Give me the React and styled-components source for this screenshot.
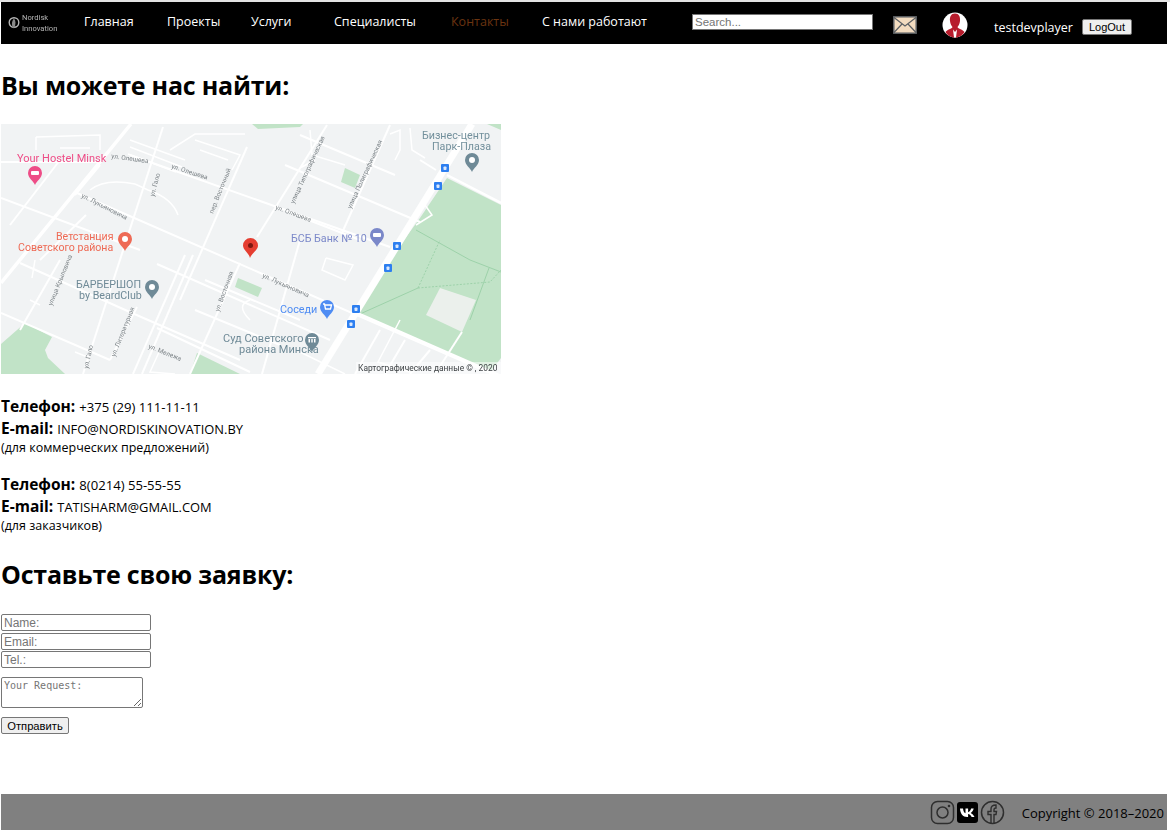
import React from 'react'
import styled, { createGlobalStyle } from 'styled-components'

const GlobalStyle = createGlobalStyle`
  html, body { margin: 0; padding: 0; background: #fff; }
  body { font-family: "Open Sans", "Noto Sans", sans-serif; color: #000; }
  * { box-sizing: border-box; }
`

const TopStrip = styled.div`
  height: 2px;
  background: #e3e3e3;
`

const Page = styled.div`
  width: 1170px;
  padding: 0 3px 0 1px;
`

const Nav = styled.nav`
  height: 42px;
  background: #000;
  display: flex;
  align-items: center;
  color: #fff;
  font-size: 12.5px;
`

const Logo = styled.div`
  width: 83px;
  padding-left: 7px;
  display: flex;
  align-items: center;
  gap: 2px;
  color: #b5b5b5;
  filter: blur(0.4px);
`

const LogoText = styled.span`
  font-family: "Roboto", sans-serif;
  font-size: 7.6px;
  line-height: 11px;
`

const NavLink = styled.a`
  width: ${props => props.$width}px;
  flex: none;
  color: ${props => (props.$active ? '#6b3410' : '#fff')};
  position: relative;
  top: -2px;
`

const Search = styled.input`
  width: 181px;
  height: 16px;
  margin-right: 20px;
  position: relative;
  top: -1px;
  padding: 1px 2px;
  font-family: "Liberation Sans", Arial, sans-serif;
  font-size: 11.5px;
  background: #fff;
  border: 1px solid #767676;
  border-radius: 0;
  &::placeholder { color: #757575; }
`

const Mail = styled.svg`
  width: 24px;
  height: 18px;
  margin-top: 3px;
  margin-right: 25px;
  flex: none;
`

const Avatar = styled.svg`
  width: 26px;
  height: 26px;
  margin-top: 4px;
  margin-right: 26px;
  flex: none;
`

const UserName = styled.span`
  width: 88px;
  flex: none;
  font-size: 12.5px;
  margin-top: 8px;
`

const LogOut = styled.button`
  width: 50px;
  height: 16px;
  margin-top: 8px;
  padding: 0;
  font-family: "Liberation Sans", Arial, sans-serif;
  font-size: 11px;
  line-height: 13px;
  color: #000;
  background: #efefef;
  border: 1px solid #767676;
  border-radius: 2px;
`

const Main = styled.main`
  height: 750px;
`

const Heading = styled.h1`
  margin: 0;
  font-size: 25px;
  line-height: 36px;
  letter-spacing: -0.22px;
  font-weight: 700;
`

const MapHeading = styled(Heading)`
  padding-top: 23px;
  margin-bottom: 21px;
`

const FormHeading = styled(Heading)`
  padding-top: 4px;
  margin-bottom: 22px;
`

const MapPicture = styled.svg`
  display: block;
  width: 500px;
  height: 250px;
  filter: blur(0.35px);
`

const Contacts = styled.div`
  margin-top: 22px;
  margin-bottom: 18px;
  & + & { margin-top: 0; }
`

const Line = styled.div`
  line-height: 21px;
  height: 22px;
  white-space: nowrap;
`

const Label = styled.b`
  font-size: 15.5px;
  font-weight: 700;
`

const Value = styled.span`
  font-size: ${props => props.$size}px;
`

const Note = styled.div`
  font-size: 12.5px;
  line-height: 18px;
  height: 17px;
  margin-top: -1px;
`

const Form = styled.form`
  display: flex;
  flex-direction: column;
  align-items: flex-start;
`

const Field = styled.input`
  width: 150px;
  height: 17px;
  margin-bottom: ${props => props.$gap}px;
  padding: 1px 2px;
  font-family: "Liberation Sans", Arial, sans-serif;
  font-size: 12px;
  background: #fff;
  border: 1px solid #767676;
  border-radius: 2px;
  &::placeholder { color: #757575; }
`

const Request = styled.textarea`
  width: 142px;
  height: 31px;
  margin-top: 7px;
  padding: 2px;
  font-family: "DejaVu Sans Mono", monospace;
  font-size: 10px;
  line-height: 12px;
  border: 1px solid #767676;
  border-radius: 2px;
  &::placeholder { color: #757575; }
`

const Submit = styled.button`
  width: 68px;
  height: 17px;
  margin-top: 9px;
  padding: 0;
  font-family: "Liberation Sans", Arial, sans-serif;
  font-size: 11.2px;
  color: #000;
  background: #efefef;
  border: 1px solid #767676;
  border-radius: 2px;
`

const Footer = styled.footer`
  height: 36px;
  background: #808080;
  display: flex;
  align-items: center;
  justify-content: flex-end;
  padding-right: 3px;
`

const Social = styled.svg`
  width: 25px;
  height: 25px;
  flex: none;
`

const Copyright = styled.span`
  margin-left: 17px;
  font-size: 13px;
  position: relative;
  top: 1px;
`

const WHITE_ROADS = [
  // wide avenues
  [7, 472, 124, 318, 374],
  [3.5, 131, 124, 1, 283],
  // streets running south east
  [2, 130, 155, 390, 247],
  [2, 1, 162, 100, 162],
  [2, 1, 198, 140, 250],
  [2, 77, 193, 501, 378],
  [2, 20, 263, 132, 313],
  [2, 132, 313, 240, 360],
  [2, 1, 313, 110, 360],
  [2, 157, 264, 330, 340],
  [2, 157, 328, 250, 372],
  [2, 285, 165, 420, 222],
  [2, 300, 135, 395, 175],
  [2, 288, 212, 360, 240],
  [2.5, 447, 175, 501, 203],
  [2, 420, 160, 436, 170],
  [2, 205, 280, 300, 320],
  [2, 195, 310, 280, 345],
  // streets running north north east
  [2, 163, 127, 83, 374],
  [2, 247, 147, 180, 300],
  [2, 240, 263, 190, 374],
  [2, 327, 125, 257, 237],
  [2, 390, 125, 342, 233],
  [2, 300, 240, 262, 374],
  [2, 137, 307, 110, 360],
  [2, 185, 255, 133, 374],
  [2, 193, 255, 142, 374],
  [2, 86, 215, 40, 260],
  [2, 60, 160, 10, 225],
  [2, 100, 165, 75, 195],
  [2, 60, 260, 20, 330],
  [2, 380, 330, 355, 374],
  [2, 405, 340, 385, 374],
  [2, 430, 350, 410, 374],
  [2, 462, 332, 435, 374],
]

// small yards and driveways between the streets
const YARDS = [
  'M130 140 L185 160 M130 147 L182 167 M128 154 L176 172 M170 150 L195 134 L245 134',
  'M36 137 L36 150 M36 137 L100 135 L100 150 M60 148 L90 148',
  'M195 140 L240 155 L232 170 M200 150 L228 160',
  'M90 190 Q105 178 135 184 M135 184 L148 190 Q172 198 178 215',
  'M310 130 L312 155 L345 165 M390 134 L400 130 L400 150 L395 160 M410 128 L412 150 L425 158',
  'M300 168 L315 160 M425 205 L432 215 L416 225',
  'M35 260 L32 278 M30 300 L40 305',
  'M326 258 L322 270 L345 280 L353 265 L326 258',
  'M400 320 L378 362 L410 372 M300 352 L345 374',
  'M75 352 L90 358 M160 350 L150 372 L175 374',
  'M250 300 Q235 305 250 320',
]

const GREENS = [
  '447,178 501,205 501,358 489,374 480,367 357,313 393,255 420,218',
  '1,344 25,323 52,337 45,350 48,358 65,374 1,374',
  '197,353 240,374 190,374',
  '238,278 262,288 258,297 235,287',
  '345,168 360,175 355,188 341,182',
  '252,124 303,124 300,127 258,129',
  '487,124 501,124 501,130',
]

const LABELS = [
  ['Your Hostel Minsk', 17, 162, '#ee4d87', 11],
  ['Ветстанция', 56, 240, '#ee6a55', 10.6],
  ['Советского района', 18, 251, '#ee6a55', 10.6],
  ['БАРБЕРШОП', 76, 288, '#6f8a97', 10.7],
  ['by BeardClub', 79, 299, '#6f8a97', 10.7],
  ['Суд Советского', 223, 342, '#6f8a97', 11],
  ['района Минска', 239, 353, '#6f8a97', 11],
  ['Соседи', 280, 313, '#4e8cf3', 10.8],
  ['БСБ Банк № 10', 291, 242, '#7b88c9', 10.7],
  ['Бизнес-центр', 422, 139, '#73909c', 10.7],
  ['Парк-Плаза', 432, 150, '#73909c', 10.7],
]

const STREETS = [
  ['ул. Олешева', 111, 158, 8],
  ['ул. Олешева', 171, 168, 18],
  ['ул. Олешева', 275, 209, 20],
  ['ул. Лукьяновича', 81, 197, 27],
  ['ул. Лукьяновича', 262, 277, 24],
  ['ул. Гало', 154, 197, -75],
  ['ул. Гало', 88, 369, -78],
  ['пер. Восточный', 213, 214, -68],
  ['ул. Восточная', 219, 312, -70],
  ['улица Крыловича', 52, 306, -68],
  ['ул. Литературная', 115, 357, -68],
  ['ул. Мележа', 148, 348, 22],
  ['улица Типографическая', 294, 204, -65],
  ['улица Полиграфическая', 351, 209, -65],
]

const BUS_STOPS = [
  [445, 168],
  [438, 186],
  [397, 246],
  [388, 268],
  [356, 309],
  [351, 324],
]

const Pin = ({ x, y, color, glyph }) => (
  <g transform={`translate(${x} ${y})`}>
    <path d="M0 11 C-1.5 7 -7 4 -7 -1 A7 7 0 0 1 7 -1 C7 4 1.5 7 0 11 Z" fill={color} />
    {glyph === 'dot' && <circle cx="0" cy="-1" r="3" fill="#fff" />}
    {glyph === 'bed' && <rect x="-4" y="-3" width="8" height="4" rx="1" fill="#fff" />}
    {glyph === 'cart' && <path d="M-4 -4 H-2.500 L-1.500 1 H3.500 L4.500 -3 H-2" fill="none" stroke="#fff" strokeWidth="1.300" />}
    {glyph === 'bank' && <path d="M-4 -4 H4 V-2.800 H-4 Z M-3.500 -2 H-2 V1.500 H-3.500 Z M-.7 -2 H.7 V1.500 H-.7 Z M2 -2 H3.500 V1.500 H2 Z" fill="#fff" />}
  </g>
)

const CityMap = () => (
  <MapPicture viewBox="1 124 500 250" xmlns="http://www.w3.org/2000/svg">
    <rect x="1" y="124" width="500" height="250" fill="#f1f3f4" />
    {GREENS.map(points => <polygon key={points} points={points} fill="#c1e3c7" />)}
    <polygon points="440,288 476,300 462,332 426,315" fill="#ebf0ec" />
    <g fill="none" stroke="#98cfa6" strokeWidth="0.9">
      <path d="M360 314 L418 288" />
      <path d="M418 288 L490 282 L501 270" strokeDasharray="2 1.500" />
      <path d="M418 288 L440 240" strokeDasharray="2 1.500" />
      <path d="M416 230 L470 260 L501 272" />
      <path d="M489 268 L470 320" />
    </g>
    <path d={YARDS.join(' ')} fill="none" stroke="#fff" strokeWidth="1.500" />
    {WHITE_ROADS.map(([width, x1, y1, x2, y2]) => (
      <line key={`${x1}-${y1}-${x2}`} x1={x1} y1={y1} x2={x2} y2={y2} stroke="#fff" strokeWidth={width} />
    ))}
    <line x1="357" y1="313" x2="501" y2="376" stroke="#fff" strokeWidth="2.500" />
    {STREETS.map(([text, x, y, angle]) => (
      <text key={`${text}-${x}`} x={x} y={y} transform={`rotate(${angle} ${x} ${y})`} fontFamily="Roboto, sans-serif" fontSize="6.500" fill="#7d8488">{text}</text>
    ))}
    {LABELS.map(([text, x, y, color, size]) => (
      <text key={text} x={x} y={y} fontFamily="Roboto, sans-serif" fontSize={size} fill={color}>{text}</text>
    ))}
    <Pin x={35} y={174} color="#ee4d87" glyph="bed" />
    <Pin x={125} y={240} color="#ee6a55" glyph="dot" />
    <Pin x={152} y={288} color="#6f8a97" glyph="dot" />
    <Pin x={472} y={161} color="#6f8a97" glyph="dot" />
    <Pin x={377} y={236} color="#7b88c9" glyph="bed" />
    <Pin x={327} y={308} color="#4e8cf3" glyph="cart" />
    <Pin x={312} y={341} color="#6f8a97" glyph="bank" />
    {BUS_STOPS.map(([x, y]) => (
      <g key={`${x}-${y}`}>
        <rect x={x - 4} y={y - 4} width="8" height="8" rx="1" fill="#2d7ff0" />
        <rect x={x - 1.5} y={y - 1.500} width="3" height="3.500" rx="0.800" fill="#dce9fd" />
      </g>
    ))}
    <g>
      <path d="M250 258 C248.800 253 243 250 243 245.500 A7.500 7.500 0 0 1 258 245.500 C258 250 252 253 250 258 Z" fill="#e53d30" />
      <circle cx="250.500" cy="245.500" r="2.500" fill="#7d1710" />
    </g>
    <rect x="356" y="362" width="145" height="12" fill="#fff" fillOpacity="0.5" />
    <text x="358" y="371" fontFamily="Roboto, sans-serif" fontSize="8.400" fill="#3c4043">Картографические данные © , 2020</text>
  </MapPicture>
)

const App = () => (
  <>
    <GlobalStyle />
    <TopStrip />
    <Page>
      <Nav>
        <Logo>
          <svg width="12" height="14" viewBox="0 0 12 14">
            <circle cx="6" cy="6.500" r="4.800" fill="none" stroke="#b5b5b5" strokeWidth="1.400" />
            <path d="M6 2.500 C8 5 8 8 6 12.500 C3.500 11 3 6 6 2.500 Z" fill="#8a8a8a" />
          </svg>
          <LogoText>Nordisk<br />Innovation</LogoText>
        </Logo>
        <NavLink $width={83}>Главная</NavLink>
        <NavLink $width={84}>Проекты</NavLink>
        <NavLink $width={83}>Услуги</NavLink>
        <NavLink $width={117}>Специалисты</NavLink>
        <NavLink $width={91} $active>Контакты</NavLink>
        <NavLink $width={150}>С нами работают</NavLink>
        <Search placeholder="Search..." />
        <Mail viewBox="0 0 24 18">
          <rect x="0.800" y="0.800" width="22.400" height="16.400" fill="#f3dcc0" stroke="#5b5f63" strokeWidth="1.500" />
          <path d="M1 1.500 L12 10 L23 1.500 M1 16.500 L9 8 M23 16.500 L15 8" fill="none" stroke="#5b5f63" strokeWidth="1.200" />
        </Mail>
        <Avatar viewBox="0 0 26 26">
          <circle cx="13" cy="13" r="12.500" fill="#fff" />
          <path d="M13 1.500 C9 1.500 7.500 5 8 9 C8.300 12 9.500 14 10.500 15 C10 17 5 17.500 3.500 20 C6 24 9.500 25.500 13 25.500 C16.500 25.500 20 24 22.500 20 C21 17.500 16 17 15.500 15 C16.500 14 17.700 12 18 9 C18.500 5 17 1.500 13 1.500 Z" fill="#b71c2c" />
          <path d="M11 17.500 L13 20 L15 17.500 L14 25.500 H12 Z" fill="#fff" />
        </Avatar>
        <UserName>testdevplayer</UserName>
        <LogOut type="button">LogOut</LogOut>
      </Nav>
      <Main>
        <MapHeading>Вы можете нас найти:</MapHeading>
        <CityMap />
        <Contacts>
          <Line><Label>Телефон:</Label> <Value $size={13.1}>+375 (29) 111-11-11</Value></Line>
          <Line><Label>E-mail:</Label> <Value $size={12.9}>INFO@NORDISKINOVATION.BY</Value></Line>
          <Note>(для коммерческих предложений)</Note>
        </Contacts>
        <Contacts>
          <Line><Label>Телефон:</Label> <Value $size={13.1}>8(0214) 55-55-55</Value></Line>
          <Line><Label>E-mail:</Label> <Value $size={12.9}>TATISHARM@GMAIL.COM</Value></Line>
          <Note>(для заказчиков)</Note>
        </Contacts>
        <FormHeading>Оставьте свою заявку:</FormHeading>
        <Form>
          <Field placeholder="Name:" $gap={2} />
          <Field placeholder="Email:" $gap={1} />
          <Field placeholder="Tel.:" $gap={2} />
          <Request placeholder="Your Request:" />
          <Submit type="button">Отправить</Submit>
        </Form>
      </Main>
      <Footer>
        <Social viewBox="0 0 25 25">
          <rect x="1.500" y="1.500" width="22" height="22" rx="6" fill="none" stroke="#2e2e2e" strokeWidth="1.500" />
          <circle cx="12.500" cy="12.500" r="5.500" fill="none" stroke="#2e2e2e" strokeWidth="1.500" />
          <circle cx="19" cy="6" r="1.300" fill="#2e2e2e" />
        </Social>
        <Social viewBox="0 0 25 25">
          <rect x="2" y="2" width="21" height="21" rx="3" fill="#000" />
          <path d="M4.500 8.500 H7.500 C7.800 11 8.700 12.800 10 13.300 V8.500 H12.600 V12.200 C13.900 12 15 10.500 15.600 8.500 H18.200 C17.700 10.600 16.400 12.200 15.200 13 C16.600 13.700 18.200 15 19 17 H16.100 C15.400 15.500 14.100 14.400 12.600 14.100 V17 H11.700 C7.300 17 4.800 13.800 4.500 8.500 Z" fill="#fff" transform="translate(0.500 0)" />
        </Social>
        <Social viewBox="0 0 25 25">
          <circle cx="12.500" cy="12.500" r="11" fill="none" stroke="#2e2e2e" strokeWidth="1.500" />
          <path d="M11 23 V14.500 H8 V11.500 H11 V9 C11 6 12.800 5 16 5 V8 C14.300 8 14 8.500 14 9.800 V11.500 H16.500 L16 14.500 H14 V23" fill="none" stroke="#2e2e2e" strokeWidth="1.400" />
        </Social>
        <Copyright>Copyright © 2018–2020</Copyright>
      </Footer>
    </Page>
  </>
)

export default App
